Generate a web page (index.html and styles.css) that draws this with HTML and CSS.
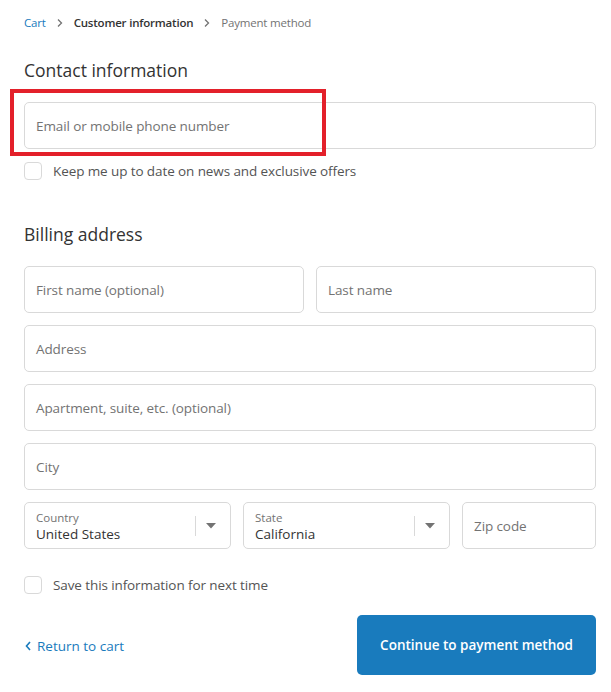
FILE: index.html
```html
<!DOCTYPE html>
<html>
<head>
<meta charset="utf-8">
<link rel="stylesheet" href="styles.css">
</head>
<body>
<main class="page">
  <nav class="crumbs">
    <a class="crumb-link">Cart</a>
    <svg class="chev" viewBox="0 0 10 10" width="10" height="10"><path d="M3 1.5 L6.5 5 L3 8.5" fill="none" stroke="#737373" stroke-width="1.3"/></svg>
    <span class="crumb-current">Customer information</span>
    <svg class="chev" viewBox="0 0 10 10" width="10" height="10"><path d="M3 1.5 L6.5 5 L3 8.5" fill="none" stroke="#737373" stroke-width="1.3"/></svg>
    <span class="crumb-next">Payment method</span>
  </nav>

  <section class="section contact">
    <h2 class="title">Contact information</h2>
    <div class="highlight-wrap">
      <div class="field"><span class="ph">Email or mobile phone number</span></div>
      <div class="highlight"></div>
    </div>
    <label class="check"><span class="box"></span><span>Keep me up to date on news and exclusive offers</span></label>
  </section>

  <section class="section billing">
    <h2 class="title">Billing address</h2>
    <div class="rows">
      <div class="row two">
        <div class="field"><span class="ph">First name (optional)</span></div>
        <div class="field"><span class="ph">Last name</span></div>
      </div>
      <div class="field"><span class="ph">Address</span></div>
      <div class="field"><span class="ph">Apartment, suite, etc. (optional)</span></div>
      <div class="field"><span class="ph">City</span></div>
      <div class="row three">
        <div class="field select">
          <div class="sel-text"><span class="sel-label">Country</span><span class="sel-value">United States</span></div>
          <span class="divider"></span>
          <svg class="caret" viewBox="0 0 10 6" width="10" height="6"><path d="M0 0 H10 L5 5.5 Z" fill="#737373"/></svg>
        </div>
        <div class="field select">
          <div class="sel-text"><span class="sel-label">State</span><span class="sel-value">California</span></div>
          <span class="divider"></span>
          <svg class="caret" viewBox="0 0 10 6" width="10" height="6"><path d="M0 0 H10 L5 5.5 Z" fill="#737373"/></svg>
        </div>
        <div class="field"><span class="ph">Zip code</span></div>
      </div>
    </div>
    <label class="check save"><span class="box"></span><span>Save this information for next time</span></label>
  </section>

  <footer class="actions">
    <a class="back">
      <svg viewBox="0 0 8 12" width="8" height="12"><path d="M6 2 L2.5 6 L6 10" fill="none" stroke="#197bbd" stroke-width="1.6"/></svg>
      Return to cart
    </a>
    <button class="btn">Continue to payment method</button>
  </footer>
</main>
</body>
</html>
```

FILE: styles.css
```css
* { box-sizing: border-box; }
html, body { margin: 0; padding: 0; background: #fff; }
body {
  font-family: "Open Sans", "Noto Sans", "Liberation Sans", sans-serif;
  color: #333;
  -webkit-font-smoothing: antialiased;
}
.page {
  width: 611px;
  padding: 12px 15px 0 24px;
}
.crumbs {
  display: flex;
  align-items: center;
  gap: 9px;
  font-size: 11.5px;
  letter-spacing: -0.2px;
  height: 20px;
  color: #737373;
}
.crumb-link { color: #197bbd; }
.crumb-current { color: #333; font-weight: 600; }
.chev { margin-top: 1px; }

.title {
  font-size: 17.5px;
  font-weight: 400;
  margin: 0;
  color: #333;
  line-height: 24px;
}
.contact { margin-top: 26px; }
.contact .title { margin-bottom: 20px; }

.highlight-wrap { position: relative; }
.highlight {
  position: absolute;
  left: -14px;
  top: -13px;
  width: 316px;
  height: 67px;
  border: 4px solid #e3202a;
  pointer-events: none;
}

.field {
  height: 47px;
  border: 1px solid #d9d9d9;
  border-radius: 5px;
  display: flex;
  align-items: center;
  padding: 0 11px;
  background: #fff;
  min-width: 0;
}
.ph { font-size: 13.5px; color: #737373; letter-spacing: -0.1px; }

.check {
  display: flex;
  align-items: center;
  gap: 11px;
  font-size: 13.5px;
  letter-spacing: -0.1px;
  color: #545454;
  margin-top: 13px;
}
.box {
  width: 18px;
  height: 18px;
  border: 1px solid #d9d9d9;
  border-radius: 4px;
  flex: none;
}

.billing { margin-top: 42px; }
.billing .title { margin-bottom: 20px; }
.rows { display: flex; flex-direction: column; gap: 12px; }
.row { display: grid; gap: 12px; }
.row.two { grid-template-columns: 1fr 1fr; }
.row.three { grid-template-columns: 207fr 207fr 134fr; }

.select { padding-right: 14px; }
.sel-text { display: flex; flex-direction: column; flex: 1; min-width: 0; }
.sel-label { font-size: 11.5px; color: #737373; line-height: 15px; margin-top: 1px; }
.sel-value { font-size: 13.5px; color: #333; line-height: 18px; }
.divider { width: 1px; height: 20px; background: #d9d9d9; margin-right: 10px; }
.caret { flex: none; }

.save { margin-top: 27px; }

.actions {
  display: flex;
  align-items: center;
  justify-content: space-between;
  margin-top: 21px;
}
.back {
  display: flex;
  align-items: center;
  gap: 5px;
  color: #197bbd;
  font-size: 13.5px;
  margin-top: 2px;
}
.btn {
  width: 239px;
  height: 60px;
  border: none;
  border-radius: 5px;
  background: #197bbd;
  color: #fff;
  font-family: inherit;
  font-size: 13.5px;
  font-weight: 600;
}
```
